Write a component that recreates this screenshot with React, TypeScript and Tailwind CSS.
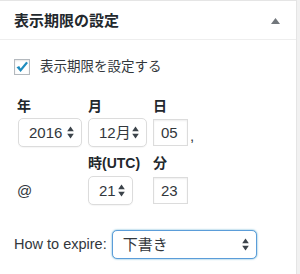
import type { ReactNode } from 'react';

const font = { fontFamily: '"Liberation Sans", "Noto Sans CJK JP", sans-serif' };

function Arrows() {
  return (
    <svg width="7" height="13" viewBox="0 0 7 13" className="shrink-0">
      <path d="M3.5 0.5 L6.8 5.2 L0.2 5.2 Z" fill="#3c434a" />
      <path d="M3.5 12.5 L6.8 7.8 L0.2 7.8 Z" fill="#3c434a" />
    </svg>
  );
}

function Select({ value, width, focused }: { value: string; width: string; focused?: boolean }) {
  return (
    <div
      className={`flex items-center justify-between h-[29px] pl-[10px] pr-[7px] bg-white rounded-[5px] text-[15px] text-[#32373c] ${width} ${
        focused
          ? 'border border-[#5b9dd9] shadow-[0_0_2px_rgba(30,140,190,0.8)]'
          : 'border border-[#dcdcdc] shadow-[0_1px_1px_rgba(0,0,0,0.04)]'
      }`}
    >
      <span>{value}</span>
      <Arrows />
    </div>
  );
}

function Field({ value }: { value: string }) {
  return (
    <div className="flex items-center h-[27px] w-[35px] pl-[7px] bg-white border border-[#dcdcdc] shadow-[inset_0_1px_2px_rgba(0,0,0,0.07)] text-[15px] text-[#32373c]">
      {value}
    </div>
  );
}

function Label({ children }: { children: ReactNode }) {
  return <div className="text-[14px] font-bold text-[#23282d] leading-4">{children}</div>;
}

export default function App() {
  return (
    <div className="w-[300px] h-[274px] bg-[#f1f1f1] overflow-hidden" style={font}>
      <div className="w-[297px] h-[274px] bg-white border-t border-r border-[#e5e5e5]">
        <div className="flex items-center justify-between h-[39px] pl-[14px] pr-[16px] border-b border-[#eeeeee]">
          <h2 className="text-[15px] font-bold text-[#23282d] pt-[2px]">表示期限の設定</h2>
          <svg width="9" height="6" viewBox="0 0 9 6" className="mt-px">
            <path d="M4.5 0 L9 6 L0 6 Z" fill="#72777c" />
          </svg>
        </div>

        <div className="pl-[14px]">
          <div className="flex items-center gap-[10px] mt-[17px]">
            <div className="w-[16px] h-[16px] border border-[#b4b9be] bg-white shadow-[inset_0_1px_2px_rgba(0,0,0,0.1)] flex items-center justify-center">
              <svg width="14" height="12" viewBox="0 0 14 12">
                <path d="M1.5 6.2 L4.2 5 L5.6 7.5 L11.2 0.8 L13 2 L5.6 11 Z" fill="#1e8cbe" />
              </svg>
            </div>
            <span className="text-[13.5px] text-[#32373c]">表示期限を設定する</span>
          </div>

          <div className="pl-[3px] mt-[21px]">
            <div className="grid grid-cols-[71px_65px_1fr]">
              <Label>年</Label>
              <Label>月</Label>
              <Label>日</Label>
            </div>
            <div className="grid grid-cols-[71px_65px_1fr] mt-[4px] items-center">
              <div className="pl-px">
                <Select value="2016" width="w-[64px]" />
              </div>
              <Select value="12月" width="w-[59px]" />
              <div className="flex items-center gap-[2px]">
                <Field value="05" />
                <span className="text-[15px] text-[#32373c] leading-none mt-[6px]">,</span>
              </div>
            </div>

            <div className="grid grid-cols-[71px_65px_1fr] mt-[8px]">
              <div />
              <Label>時(UTC)</Label>
              <Label>分</Label>
            </div>
            <div className="grid grid-cols-[71px_65px_1fr] mt-[5px] items-center">
              <span className="text-[15px] text-[#32373c]">@</span>
              <Select value="21" width="w-[45px]" />
              <Field value="23" />
            </div>
          </div>

          <div className="flex items-center gap-[5px] mt-[25px]">
            <span className="text-[14.5px] text-[#32373c]">How to expire:</span>
            <Select value="下書き" width="w-[145px]" focused />
          </div>
        </div>
      </div>
    </div>
  );
}
